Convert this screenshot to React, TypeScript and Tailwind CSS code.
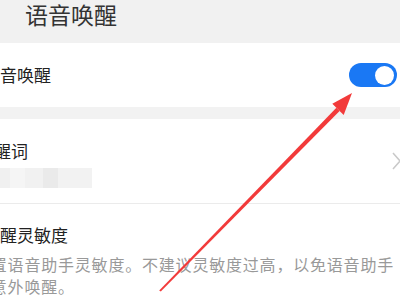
import React from 'react';

const cjk = { fontFamily: '"Noto Sans CJK SC", "Noto Sans", sans-serif' };

const Toggle: React.FC = () => (
  <div className="flex h-[24px] w-[48px] shrink-0 items-center justify-end rounded-full bg-[#1a78f4] pr-[3px]">
    <div className="h-[19px] w-[19px] rounded-full bg-white" />
  </div>
);

// pixelated placeholder under 唤醒词
const Mosaic: React.FC = () => (
  <div className="mt-[6px] flex h-[20px] w-[92px] opacity-90">
    <div className="w-[10px] bg-[#efefef]" />
    <div className="w-[15px] bg-[#f5f5f5]" />
    <div className="w-[18px] bg-[#f0f0f0]" />
    <div className="w-[15px] bg-[#e8e8e8]" />
    <div className="flex-1 bg-[#f1f1f1]" />
  </div>
);

const Arrow: React.FC = () => (
  <svg className="pointer-events-none absolute left-0 top-0" width="400" height="300" viewBox="0 0 400 300">
    <polygon
      points="160.8,291.6 159.2,290.4 336.4,107.7 339.6,110.9"
      fill="#f23a3a"
    />
    <polygon points="352,93 343.7,114.9 332.3,103.7" fill="#f23a3a" />
  </svg>
);

export default function App() {
  return (
    <div className="relative h-[300px] w-[400px] overflow-hidden bg-white" style={cjk}>
      {/* page header */}
      <div className="h-[43px] bg-[#f1f1f1] pl-[25px] pt-[3px]">
        <h1 className="text-[23px] leading-[23px] text-[#333333]">语音唤醒</h1>
      </div>

      {/* switch row */}
      <div className="flex h-[64px] items-center justify-between pr-[3px]">
        <span className="-ml-[17px] text-[17px] leading-[22px] text-[#222222]">语音唤醒</span>
        <Toggle />
      </div>

      <div className="h-[12px] bg-[#f2f2f2]" />

      {/* wake word row */}
      <div className="flex h-[85px] items-center justify-between border-b border-[#ebebeb]">
        <div className="self-start pt-[21px]">
          <div className="-ml-[23px] text-[17px] leading-[22px] text-[#222222]">唤醒词</div>
          <Mosaic />
        </div>
        <svg width="9" height="18" viewBox="0 0 9 18" className="-mr-[1px] shrink-0">
          <polyline points="1,1 8,9 1,17" fill="none" stroke="#c9c9c9" strokeWidth="1.5" />
        </svg>
      </div>

      {/* sensitivity */}
      <div className="pt-[20px]">
        <div className="-ml-[17px] text-[17px] leading-[22px] text-[#222222]">唤醒灵敏度</div>
        <p className="-ml-[26px] mt-[7px] w-[426px] text-[16px] leading-[22px] tracking-[0.8px] text-[#999999]">
          设置语音助手灵敏度。不建议灵敏度过高，以免语音助手被意外唤醒。
        </p>
      </div>

      <Arrow />
    </div>
  );
}
